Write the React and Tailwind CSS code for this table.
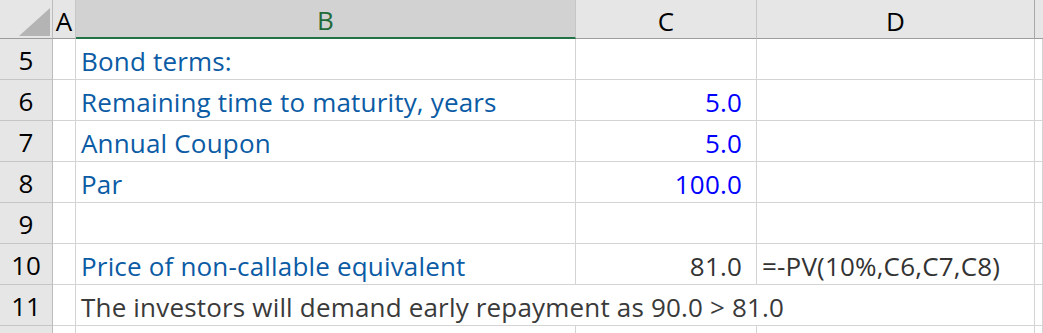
import React from "react";

const font = { fontFamily: "'Open Sans', Lato, sans-serif" };

function Corner() {
  return (
    <div className="relative h-[39px] bg-[#e6e6e6] border-r border-r-[#bcbcbc] border-b border-b-[#9c9c9c]">
      <svg className="absolute left-[19px] top-[8px]" width="31" height="28" viewBox="0 0 31 28">
        <polygon points="31,0 31,28 0,28" fill="#b4b4b4" />
      </svg>
    </div>
  );
}

function ColHead({ label, selected, last }) {
  return (
    <div
      className={
        "h-[39px] flex items-end justify-center pb-[4px] text-[26px] leading-none border-r " +
        (selected
          ? "bg-[#d2d2d2] text-[#1f6b3a] border-b-2 border-b-[#217346] border-r-[#c6c6c6]"
          : "bg-[#e6e6e6] text-black border-b border-b-[#9c9c9c] " +
            (last ? "border-r-[#a8a8a8]" : "border-r-[#c6c6c6]"))
      }
    >
      {label}
    </div>
  );
}

function RowHead({ n }) {
  return (
    <div className="h-[41px] flex items-end justify-center pb-[6px] bg-[#e6e6e6] text-black text-[26px] leading-none border-r border-r-[#bcbcbc] border-b border-b-[#c6c6c6]">
      {n}
    </div>
  );
}

function Cell({ children, className = "", span3 }) {
  return (
    <div
      className={
        "h-[41px] flex items-end pb-[5px] text-[26px] leading-none tracking-[0.18px] whitespace-nowrap border-r border-b border-[#d4d4d4] " +
        (span3 ? "col-span-3 " : "") +
        className
      }
    >
      {children}
    </div>
  );
}

const rows = [
  { n: 5, b: "Bond terms:" },
  { n: 6, b: "Remaining time to maturity, years", c: "5.0", cBlue: true },
  { n: 7, b: "Annual Coupon", c: "5.0", cBlue: true },
  { n: 8, b: "Par", c: "100.0", cBlue: true },
  { n: 9 },
  { n: 10, b: "Price of non-callable equivalent", c: "81.0", d: "=-PV(10%,C6,C7,C8)" },
];

export default function App() {
  return (
    <div className="w-[1043px] h-[333px] overflow-hidden bg-white" style={font}>
      <div className="grid grid-cols-[53px_23px_500px_181px_278px_8px]">
        <Corner />
        <ColHead label="A" />
        <ColHead label="B" selected />
        <ColHead label="C" />
        <ColHead label="D" last />
        <div className="h-[39px] bg-[#e6e6e6] border-b border-b-[#9c9c9c]" />

        {rows.map((r) => (
          <React.Fragment key={r.n}>
            <RowHead n={r.n} />
            <Cell />
            <Cell className="pl-[5px] text-[#0b5ba5]">{r.b}</Cell>
            <Cell className={"justify-end pr-[14px] " + (r.cBlue ? "text-[#0000ff]" : "text-[#333333]")}>{r.c}</Cell>
            <Cell className="pl-[5px] text-[#333333]">{r.d}</Cell>
            <Cell />
          </React.Fragment>
        ))}

        <RowHead n={11} />
        <Cell />
        <Cell span3 className="pl-[5px] text-[#3a3a3a]">
          The investors will demand early repayment as 90.0 &gt; 81.0
        </Cell>
        <Cell />

        <RowHead n="" />
        <Cell />
        <Cell />
        <Cell />
        <Cell />
        <Cell />
      </div>
    </div>
  );
}
